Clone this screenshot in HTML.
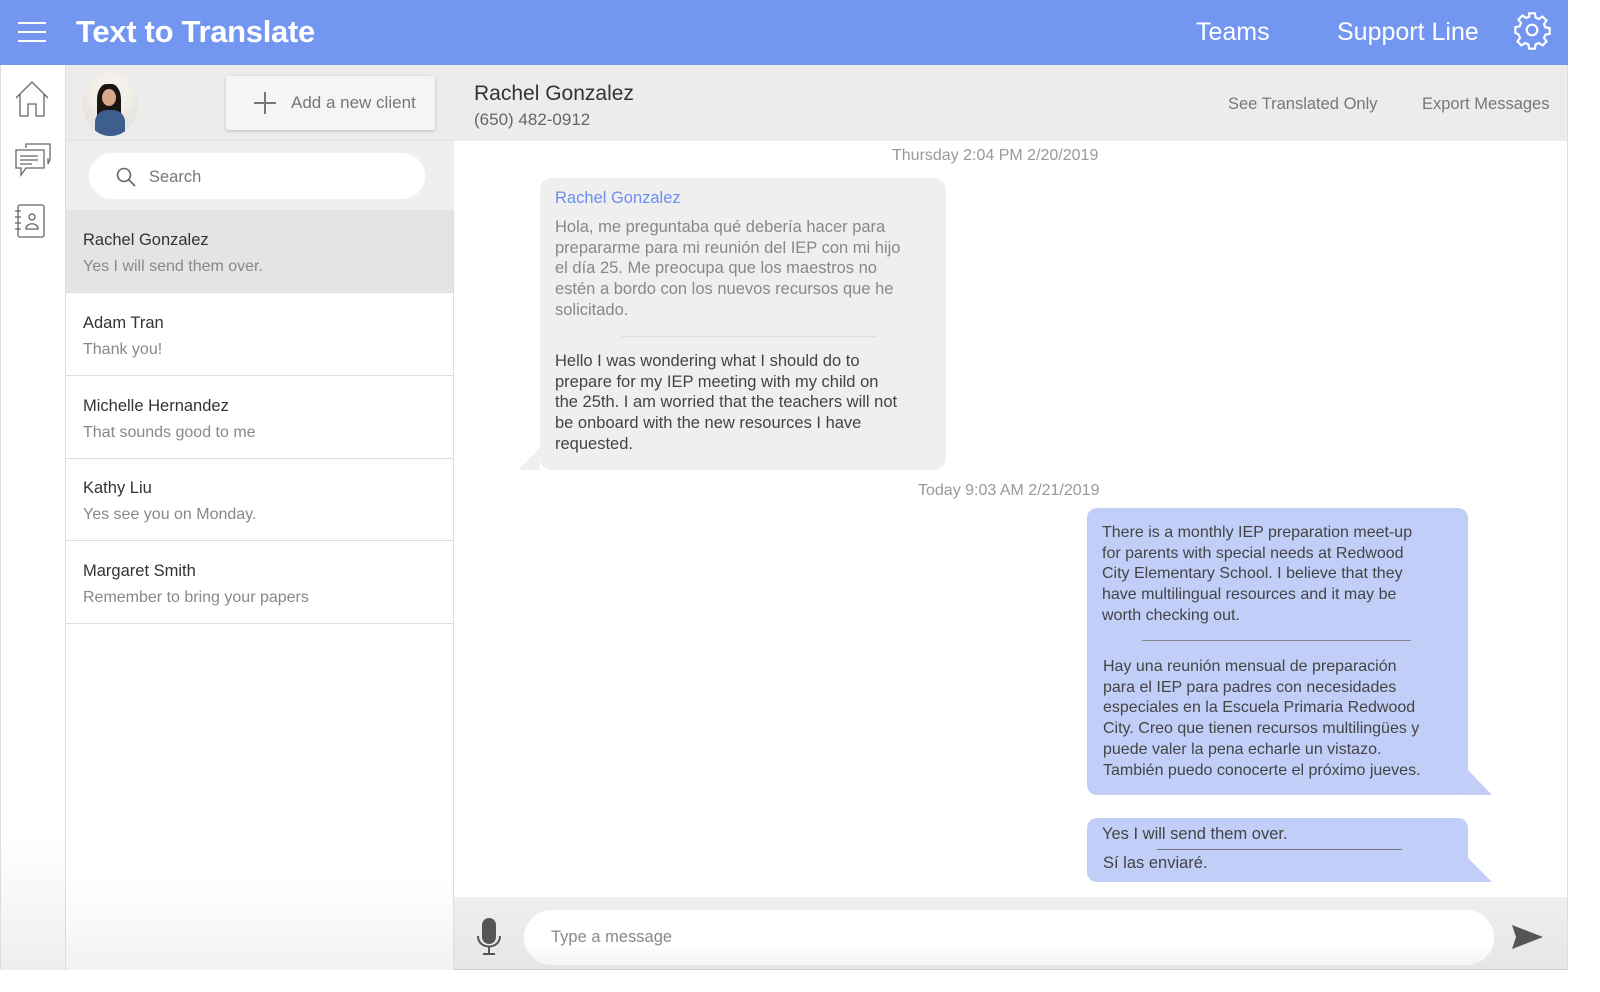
<!DOCTYPE html>
<html><head><meta charset="utf-8"><style>
*{margin:0;padding:0;box-sizing:border-box}
body{width:1600px;height:992px;background:#fff;font-family:"Liberation Sans",sans-serif;position:relative;overflow:hidden;color:#444}
.a{position:absolute}
.hdr{left:0;top:0;width:1568px;height:65px;background:#7396f0}
.nw{white-space:nowrap}
.item{position:absolute;left:66px;width:387px;height:83px;border-bottom:1px solid #ddd}
.item .n{position:absolute;left:17px;top:21px;font-size:16.5px;color:#333}
.item .p{position:absolute;left:17px;top:48px;font-size:16px;color:#888}
.bub{font-size:16.5px;line-height:20.7px}
</style></head><body>
<div class="a hdr"></div>
<div class="a" style="left:18px;top:22px;width:28px;height:2px;background:#fff"></div>
<div class="a" style="left:18px;top:31px;width:28px;height:2px;background:#fff"></div>
<div class="a" style="left:18px;top:40px;width:28px;height:2px;background:#fff"></div>
<div class="a nw" style="left:76px;top:14px;font-size:31px;font-weight:bold;color:#fff;letter-spacing:-0.3px">Text to Translate</div>
<div class="a nw" style="left:1196px;top:18px;font-size:25px;color:#fff">Teams</div>
<div class="a nw" style="left:1337px;top:18px;font-size:25px;color:#fff">Support Line</div>
<svg class="a" style="left:1512px;top:10px" width="40" height="40" viewBox="0 0 24 24" fill="none" stroke="#fff" stroke-width="1.3"><circle cx="12" cy="12" r="3.2"/><path d="M10.3 2h3.4l.5 2.6 1.9.8 2.2-1.5 2.4 2.4-1.5 2.2.8 1.9 2.6.5v3.4l-2.6.5-.8 1.9 1.5 2.2-2.4 2.4-2.2-1.5-1.9.8-.5 2.6h-3.4l-.5-2.6-1.9-.8-2.2 1.5-2.4-2.4 1.5-2.2-.8-1.9L2 13.7v-3.4l2.6-.5.8-1.9-1.5-2.2 2.4-2.4 2.2 1.5 1.9-.8z"/></svg>

<div class="a" style="left:0;top:65px;width:66px;height:905px;background:linear-gradient(#fff 85%,#eee);border-right:1px solid #ddd;border-left:1px solid #ddd"></div>
<svg class="a" style="left:14px;top:80px" width="36" height="38" viewBox="0 0 36 38" fill="none" stroke="#666" stroke-width="1.3"><path d="M2 18 L18 2 L34 18 M6 14 V36 H14 V24 H22 V36 H30 V14"/></svg>
<svg class="a" style="left:14px;top:142px" width="38" height="36" viewBox="0 0 38 36" fill="none" stroke="#666" stroke-width="1.3"><path d="M12 6 V2 H36 V18 L34 22 V16"/><path d="M2 8 H30 V26 H12 L7 33 V26 H2 Z"/><path d="M6 14 H24 M6 18 H24 M6 22 H18"/></svg>
<svg class="a" style="left:14px;top:203px" width="32" height="36" viewBox="0 0 32 36" fill="none" stroke="#666" stroke-width="1.3"><rect x="4" y="2" width="26" height="32" rx="2"/><path d="M1 8 H7 M1 14 H7 M1 20 H7 M1 26 H7"/><circle cx="18" cy="14" r="3"/><path d="M12 26 C12 19 24 19 24 26 Z"/></svg>

<div class="a" style="left:66px;top:65px;width:388px;height:76px;background:#ececec;border-bottom:1px solid #e2e2e2"></div>
<div class="a" style="left:83px;top:72px;width:55px;height:64px;border-radius:50%;background:radial-gradient(circle at 50% 30%,#f4f0ea 30%,#e8e4e0 60%);overflow:hidden">
<div class="a" style="left:14px;top:12px;width:24px;height:38px;border-radius:40% 40% 20% 20%;background:#1b1512"></div>
<div class="a" style="left:19px;top:17px;width:14px;height:17px;border-radius:50%;background:#d9a88a"></div>
<div class="a" style="left:12px;top:38px;width:30px;height:30px;border-radius:40% 40% 0 0;background:#3d5f8d"></div>
</div>
<div class="a" style="left:226px;top:76px;width:209px;height:54px;background:#f5f5f5;box-shadow:0 1px 3px rgba(0,0,0,.2);border-radius:2px"></div>
<div class="a" style="left:254px;top:102px;width:22px;height:1.5px;background:#777"></div>
<div class="a" style="left:264px;top:92px;width:1.5px;height:22px;background:#777"></div>
<div class="a nw" style="left:291px;top:93px;font-size:17px;color:#777">Add a new client</div>
<div class="a" style="left:66px;top:141px;width:388px;height:69px;background:#efefef"></div>
<div class="a" style="left:89px;top:153px;width:336px;height:46px;background:#fff;border-radius:23px"></div>
<svg class="a" style="left:115px;top:166px" width="22" height="22" viewBox="0 0 22 22" fill="none" stroke="#666" stroke-width="1.6"><circle cx="9" cy="9" r="6.5"/><path d="M14 14 L20 20"/></svg>
<div class="a nw" style="left:149px;top:168px;font-size:16.5px;color:#777">Search</div>
<div class="a" style="left:66px;top:210px;width:388px;height:760px;background:linear-gradient(#fff 88%,#f2f2f2);border-right:1px solid #ddd"></div>
<div class="item" style="top:210px;background:#e4e4e4"><div class="n nw">Rachel Gonzalez</div><div class="p nw">Yes I will send them over.</div></div>
<div class="item" style="top:293px"><div class="n nw">Adam Tran</div><div class="p nw">Thank you!</div></div>
<div class="item" style="top:376px"><div class="n nw">Michelle Hernandez</div><div class="p nw">That sounds good to me</div></div>
<div class="item" style="top:458px"><div class="n nw">Kathy Liu</div><div class="p nw">Yes see you on Monday.</div></div>
<div class="item" style="top:541px"><div class="n nw">Margaret Smith</div><div class="p nw">Remember to bring your papers</div></div>

<div class="a" style="left:454px;top:65px;width:1114px;height:76px;background:#ececec"></div>
<div class="a nw" style="left:474px;top:82px;font-size:21px;color:#333">Rachel Gonzalez</div>
<div class="a nw" style="left:474px;top:110px;font-size:17px;color:#666">(650) 482-0912</div>
<div class="a nw" style="left:1228px;top:95px;font-size:16.5px;color:#777">See Translated Only</div>
<div class="a nw" style="left:1422px;top:95px;font-size:16.5px;color:#777">Export Messages</div>
<div class="a" style="left:1567px;top:65px;width:1px;height:905px;background:#ddd"></div>

<div class="a nw" style="left:892px;top:147px;font-size:16px;color:#999">Thursday 2:04 PM 2/20/2019</div>
<svg class="a" style="left:518px;top:448px" width="30" height="23"><path d="M22 0 V22 H0 Z" fill="#efefef"/></svg>
<div class="a" style="left:540px;top:178px;width:406px;height:292px;background:#efefef;border-radius:12px"></div>
<div class="a nw" style="left:555px;top:189px;font-size:16.5px;color:#6b8ef0">Rachel Gonzalez</div>
<div class="a bub nw" style="left:555px;top:217px;color:#888">Hola, me preguntaba qué debería hacer para<br>prepararme para mi reunión del IEP con mi hijo<br>el día 25. Me preocupa que los maestros no<br>estén a bordo con los nuevos recursos que he<br>solicitado.</div>
<div class="a" style="left:621px;top:336px;width:255px;height:1px;background:#ddd"></div>
<div class="a bub nw" style="left:555px;top:351px;color:#444">Hello I was wondering what I should do to<br>prepare for my IEP meeting with my child on<br>the 25th. I am worried that the teachers will not<br>be onboard with the new resources I have<br>requested.</div>

<div class="a nw" style="left:918px;top:482px;font-size:16px;color:#999">Today 9:03 AM 2/21/2019</div>
<svg class="a" style="left:1460px;top:770px" width="34" height="26"><path d="M0 0 L8 0 L32 25 L0 25 Z" fill="#c1cff8"/></svg>
<div class="a" style="left:1087px;top:508px;width:381px;height:287px;background:#c1cff8;border-radius:10px"></div>
<div class="a nw" style="left:1102px;top:523px;font-size:16px;line-height:20.7px;color:#444">There is a monthly IEP preparation meet-up<br>for parents with special needs at Redwood<br>City Elementary School. I believe that they<br>have multilingual resources and it may be<br>worth checking out.</div>
<div class="a" style="left:1142px;top:640px;width:269px;height:1px;background:#888"></div>
<div class="a nw" style="left:1103px;top:657px;font-size:16px;line-height:20.7px;color:#444">Hay una reunión mensual de preparación<br>para el IEP para padres con necesidades<br>especiales en la Escuela Primaria Redwood<br>City. Creo que tienen recursos multilingües y<br>puede valer la pena echarle un vistazo.<br>También puedo conocerte el próximo jueves.</div>
<svg class="a" style="left:1460px;top:858px" width="34" height="25"><path d="M0 0 L8 0 L32 24 L0 24 Z" fill="#c1cff8"/></svg>
<div class="a" style="left:1087px;top:818px;width:381px;height:64px;background:#c1cff8;border-radius:10px"></div>
<div class="a nw" style="left:1102px;top:825px;font-size:16.5px;color:#444">Yes I will send them over.</div>
<div class="a" style="left:1157px;top:849px;width:245px;height:1px;background:#777"></div>
<div class="a nw" style="left:1103px;top:854px;font-size:16.5px;color:#444">Sí las enviaré.</div>

<div class="a" style="left:454px;top:897px;width:1113px;height:73px;background:linear-gradient(#efefef,#e6e6e6);border-bottom:1px solid #ccc"></div>
<svg class="a" style="left:474px;top:918px" width="30" height="38" viewBox="0 0 30 38"><rect x="8" y="0" width="14" height="26" rx="7" fill="#555"/><path d="M4 18 C4 32 26 32 26 18" fill="none" stroke="#555" stroke-width="2"/><path d="M15 29 V36 M9 36 H21" stroke="#555" stroke-width="2"/></svg>
<div class="a" style="left:524px;top:910px;width:970px;height:55px;background:linear-gradient(#fff 60%,#f4f4f4);border-radius:28px"></div>
<div class="a nw" style="left:551px;top:928px;font-size:16.5px;color:#888">Type a message</div>
<svg class="a" style="left:1512px;top:924px" width="32" height="26" viewBox="0 0 32 26"><path d="M0 1 L31 13 L0 25 L4 13 Z" fill="#555"/></svg>
</body></html>
